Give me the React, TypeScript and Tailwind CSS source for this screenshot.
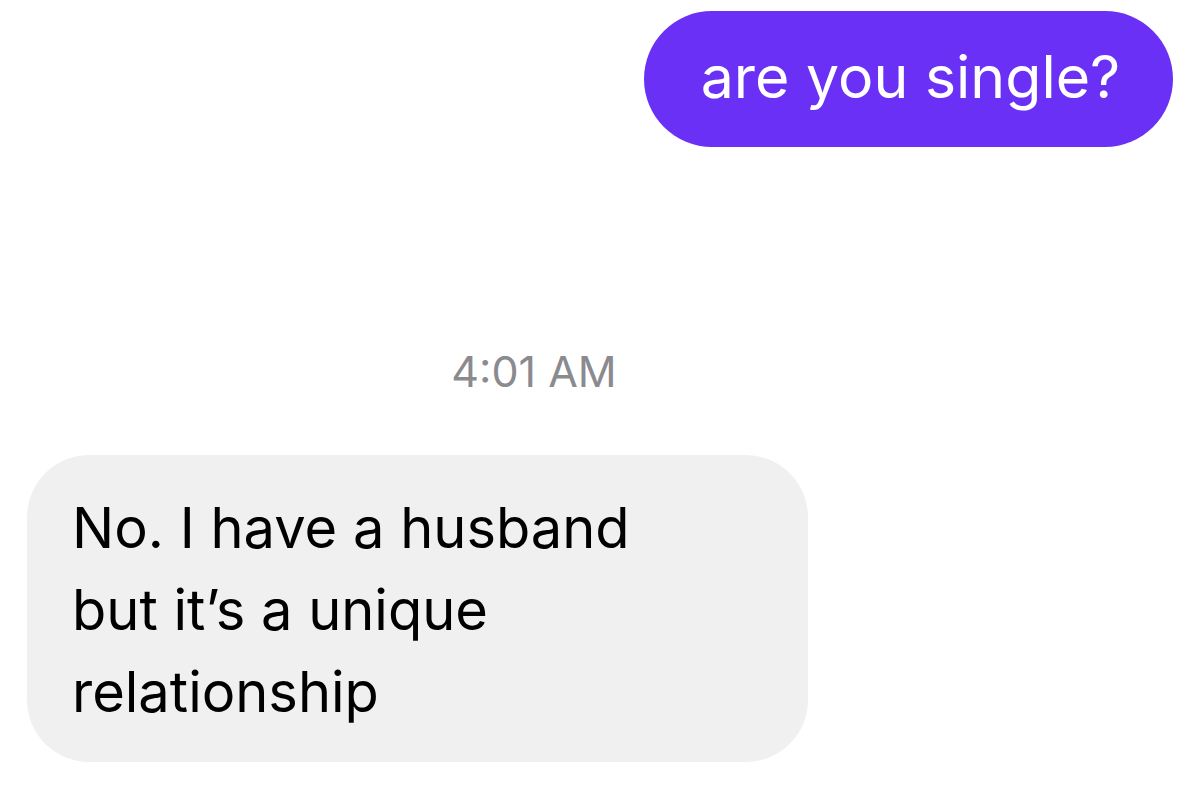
const App = () => {
  return (
    <div className="w-[1200px] h-[800px] bg-white font-['Inter',sans-serif] flex flex-col overflow-hidden">
      <div className="self-end mr-[27px] mt-[11px] h-[136px] w-[529px] flex items-center justify-center rounded-full bg-[#6b30f5]">
        <p className="text-white text-[59px] leading-[70px] pb-[4px] pl-[4px]">are you single?</p>
      </div>
      <div className="w-[1068px] mt-[198px] text-center text-[#8a8a8f] text-[43px] leading-[52px]">
        4:01 AM
      </div>
      <div className="ml-[27px] mt-[58px] w-[781px] h-[307px] rounded-[62px] bg-[#f0f0f0] pl-[45px] pt-[32px]">
        <p className="text-black text-[56px] leading-[82px]">
          No. I have a husband
          <br />
          but it’s a unique
          <br />
          relationship
        </p>
      </div>
    </div>
  );
};

export default App;
